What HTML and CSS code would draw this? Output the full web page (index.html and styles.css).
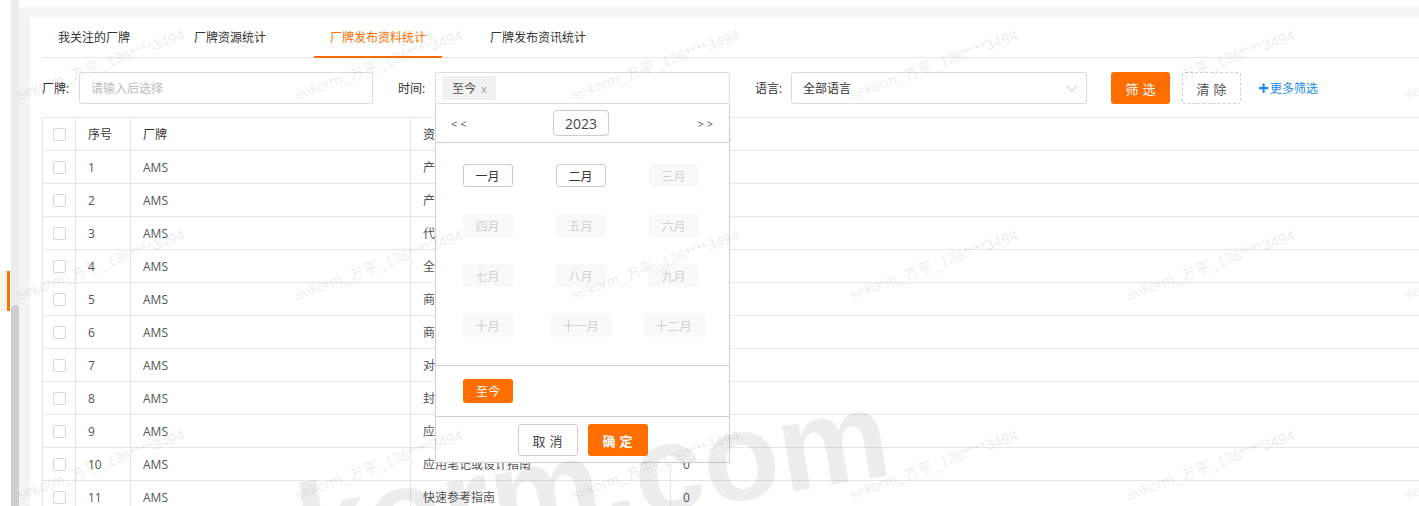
FILE: index.html
```html
<!DOCTYPE html>
<html lang="zh-CN">
<head>
<meta charset="utf-8">
<title>厂牌发布资料统计</title>
<link rel="stylesheet" href="styles.css">
</head>
<body>
<div class="app">
  <aside class="sidebar">
    <div class="side-item active"></div>
  </aside>
  <div class="side-scroll"><div class="thumb"></div></div>
  <main class="main">
    <div class="topband"></div>
    <div class="card">
      <nav class="tabs">
        <div class="tab">我关注的厂牌</div>
        <div class="tab">厂牌资源统计</div>
        <div class="tab active">厂牌发布资料统计</div>
        <div class="tab">厂牌发布资讯统计</div>
      </nav>

      <div class="filters">
        <div class="field">
          <span class="label">厂牌:</span>
          <div class="control brand"><span class="placeholder">请输入后选择</span></div>
        </div>
        <div class="field time-field">
          <span class="label">时间:</span>
          <div class="time-wrap">
            <div class="control time">
              <span class="tag">至今<span class="tag-x">x</span></span>
            </div>
            <div class="picker">
              <div class="year-row">
                <span class="arrow">&lt; &lt;</span>
                <span class="year">2023</span>
                <span class="arrow">&gt; &gt;</span>
              </div>
              <div class="months">
                <span class="month on">一月</span>
                <span class="month on">二月</span>
                <span class="month off">三月</span>
                <span class="month off">四月</span>
                <span class="month off">五月</span>
                <span class="month off">六月</span>
                <span class="month off">七月</span>
                <span class="month off">八月</span>
                <span class="month off">九月</span>
                <span class="month off">十月</span>
                <span class="month off wide">十一月</span>
                <span class="month off wide">十二月</span>
              </div>
              <div class="now-row"><span class="now-btn">至今</span></div>
              <div class="picker-foot">
                <span class="btn ghost">取消</span>
                <span class="btn primary">确定</span>
              </div>
            </div>
          </div>
        </div>
        <div class="field lang-field">
          <span class="label">语言:</span>
          <div class="control lang">
            <span class="value">全部语言</span>
            <svg class="chev" width="11" height="7" viewBox="0 0 11 7"><polyline points="0.5,0.5 5.5,6.5 10.5,0.5" fill="none" stroke="#c4c4c4" stroke-width="1"/></svg>
          </div>
        </div>
        <span class="btn primary filter-btn">筛选</span>
        <span class="btn dashed">清除</span>
        <span class="more"><b>+</b>更多筛选</span>
      </div>

      <table class="grid">
        <colgroup>
          <col class="c-check"><col class="c-no"><col class="c-brand"><col class="c-name"><col>
        </colgroup>
        <thead>
          <tr><th><span class="cb"></span></th><th>序号</th><th>厂牌</th><th>资料类型</th><th>资料数量</th></tr>
        </thead>
        <tbody>
          <tr><td><span class="cb"></span></td><td>1</td><td>AMS</td><td>产品手册</td><td>0</td></tr>
          <tr><td><span class="cb"></span></td><td>2</td><td>AMS</td><td>产品简介</td><td>0</td></tr>
          <tr><td><span class="cb"></span></td><td>3</td><td>AMS</td><td>代理商信息</td><td>0</td></tr>
          <tr><td><span class="cb"></span></td><td>4</td><td>AMS</td><td>全部资料</td><td>0</td></tr>
          <tr><td><span class="cb"></span></td><td>5</td><td>AMS</td><td>商品目录</td><td>0</td></tr>
          <tr><td><span class="cb"></span></td><td>6</td><td>AMS</td><td>商品选型表</td><td>0</td></tr>
          <tr><td><span class="cb"></span></td><td>7</td><td>AMS</td><td>对比表</td><td>0</td></tr>
          <tr><td><span class="cb"></span></td><td>8</td><td>AMS</td><td>封装信息</td><td>0</td></tr>
          <tr><td><span class="cb"></span></td><td>9</td><td>AMS</td><td>应用指南</td><td>0</td></tr>
          <tr><td><span class="cb"></span></td><td>10</td><td>AMS</td><td>应用笔记或设计指南</td><td>0</td></tr>
          <tr><td><span class="cb"></span></td><td>11</td><td>AMS</td><td>快速参考指南</td><td>0</td></tr>
        </tbody>
      </table>
    </div>
  </main>
</div>

<div class="wm-layer">
  <div class="wm-grid">
    <span class="wm">sekorm_方平_136****3494</span><span class="wm">sekorm_方平_136****3494</span><span class="wm">sekorm_方平_136****3494</span><span class="wm">sekorm_方平_136****3494</span><span class="wm">sekorm_方平_136****3494</span><span class="wm">sekorm_方平_136****3494</span>
    <span class="wm">sekorm_方平_136****3494</span><span class="wm">sekorm_方平_136****3494</span><span class="wm">sekorm_方平_136****3494</span><span class="wm">sekorm_方平_136****3494</span><span class="wm">sekorm_方平_136****3494</span><span class="wm">sekorm_方平_136****3494</span>
    <span class="wm">sekorm_方平_136****3494</span><span class="wm">sekorm_方平_136****3494</span><span class="wm">sekorm_方平_136****3494</span><span class="wm">sekorm_方平_136****3494</span><span class="wm">sekorm_方平_136****3494</span><span class="wm">sekorm_方平_136****3494</span>
  </div>
  <div class="wm-big">sekorm.com</div>
</div>
</body>
</html>
```

FILE: styles.css
```css
* { box-sizing: border-box; }

html, body {
  margin: 0;
  padding: 0;
  width: 1419px;
  height: 506px;
  overflow: hidden;
  background: #fff;
  font-family: "Open Sans", "Noto Sans CJK SC", sans-serif;
  font-size: 12px;
  color: #333;
}

.app {
  display: flex;
  height: 506px;
}

/* left sidebar */
.sidebar {
  width: 11px;
  flex: none;
  background: #fff;
  padding-top: 271px;
}
.side-item {
  height: 40px;
  width: 10px;
}
.side-item.active {
  background: #fff5e8;
  border-right: 3px solid #ff6e00;
}

.side-scroll {
  width: 8px;
  flex: none;
  background: #ececec;
  display: flex;
  flex-direction: column;
  padding-top: 305px;
}
.thumb {
  flex: 1;
  background: #cfcfd1;
  border-radius: 4px 4px 0 0;
}

/* main */
.main {
  flex: 1;
  min-width: 0;
  background: #f4f4f4;
  display: flex;
  flex-direction: column;
}
.topband {
  height: 7px;
  background: #fff;
  flex: none;
}
.card {
  flex: 1;
  margin: 10px 0 0 11px;
  background: #fff;
  padding-left: 12px;
}

/* tabs */
.tabs {
  display: flex;
  align-items: flex-start;
  gap: 32px;
  height: 41px;
  border-bottom: 1px solid #e6e6e6;
}
.tab {
  padding: 0 16px;
  height: 40px;
  line-height: 41px;
  color: #333;
}
.tab.active {
  color: #ff6e00;
  height: 41px;
  border-bottom: 2px solid #ff6e00;
}

/* filters */
.filters {
  display: flex;
  align-items: center;
  height: 32px;
  margin-top: 14px;
}
.field {
  display: flex;
  align-items: center;
  margin-right: 25px;
}
.lang-field { margin-right: 24px; }
.label {
  width: 37px;
  flex: none;
  color: #333;
}
.lang-field .label { width: 36px; }
.control {
  height: 32px;
  border: 1px solid #dcdcdc;
  border-radius: 3px;
  display: flex;
  align-items: center;
  background: #fff;
}
.brand { width: 294px; padding-left: 11px; }
.placeholder { color: #bcbcbc; }
.time-wrap { position: relative; }
.time { width: 295px; padding-left: 6px; }
.tag {
  display: inline-flex;
  align-items: center;
  height: 24px;
  padding: 0 9px 0 10px;
  background: #f1f1f1;
  border-radius: 3px;
  color: #555;
}
.tag-x {
  margin-left: 5px;
  color: #999;
  font-size: 11px;
}
.lang {
  width: 296px;
  padding: 0 9px 0 11px;
  justify-content: space-between;
}
.lang .value { color: #333; }

/* buttons */
.btn {
  display: inline-flex;
  align-items: center;
  justify-content: center;
  height: 32px;
  border-radius: 3px;
  font-size: 13px;
  letter-spacing: 4px;
  text-indent: 4px;
}
.btn.primary {
  background: #ff6e00;
  color: #fff;
}
.filter-btn { width: 59px; }
.btn.dashed {
  width: 59px;
  margin-left: 12px;
  border: 1px dashed #cfcfcf;
  color: #555;
}
.more {
  margin-left: 17px;
  color: #1b8cf0;
  display: inline-flex;
  align-items: center;
}
.more b {
  font-size: 19px;
  font-weight: 700;
  line-height: 1;
  margin-right: 1px;
}

/* date picker */
.picker {
  position: absolute;
  left: 0;
  top: 32px;
  width: 295px;
  background: #fff;
  border: 1px solid #d2d2d2;
  border-top: none;
  z-index: 5;
}
.year-row {
  height: 39px;
  border-bottom: 1px solid #d2d2d2;
  display: flex;
  align-items: center;
  justify-content: space-between;
  padding: 0 16px 0 15px;
}
.arrow {
  color: #555;
  font-size: 11px;
}
.year {
  width: 56px;
  height: 26px;
  border: 1px solid #cccccc;
  border-radius: 4px;
  display: flex;
  align-items: center;
  justify-content: center;
  font-size: 14px;
  color: #444;
  margin-right: 2px;
}
.months {
  display: grid;
  grid-template-columns: repeat(3, 93px);
  justify-items: center;
  row-gap: 27px;
  padding: 21px 0 28px 5px;
  border-bottom: 1px solid #d2d2d2;
}
.month {
  width: 50px;
  height: 23px;
  border-radius: 3px;
  display: flex;
  align-items: center;
  justify-content: center;
  font-size: 12px;
}
.month.wide { width: 62px; }
.month.on {
  border: 1px solid #cbcbcb;
  color: #333;
}
.month.off {
  background: #f9f9f9;
  color: #d0d0d0;
}
.now-row {
  padding: 13px 0 13px 27px;
  border-bottom: 1px solid #d2d2d2;
  display: flex;
}
.now-btn {
  width: 50px;
  height: 24px;
  border-radius: 3px;
  background: #ff6e00;
  color: #fff;
  display: flex;
  align-items: center;
  justify-content: center;
}
.picker-foot {
  display: flex;
  justify-content: center;
  gap: 10px;
  padding: 7px 0 6px;
}
.picker-foot .btn { width: 60px; }
.btn.ghost {
  border: 1px solid #cfcfcf;
  color: #444;
}
.picker-foot .btn.primary { font-weight: 600; }

/* table */
.grid {
  margin-top: 13px;
  width: 100%;
  border-collapse: collapse;
  table-layout: fixed;
}
.c-check { width: 33px; }
.c-no { width: 55px; }
.c-brand { width: 280px; }
.c-name { width: 260px; }
.grid th, .grid td {
  height: 33px;
  padding: 0 0 0 12px;
  border: 1px solid #e6e6e6;
  text-align: left;
  font-weight: 400;
  white-space: nowrap;
  overflow: hidden;
}
.grid th { color: #333; }
.grid td { color: #555; }
.grid th:first-child, .grid td:first-child { padding-left: 10px; }
.grid th:last-child, .grid td:last-child { border-right: none; }
.cb {
  display: block;
  width: 13px;
  height: 13px;
  border: 1px solid #d6d6d6;
  border-radius: 2px;
  background: #fff;
}

/* watermarks (overlay) */
.wm-layer {
  position: absolute;
  left: 0;
  top: 0;
  width: 1419px;
  height: 506px;
  overflow: hidden;
  pointer-events: none;
  z-index: 20;
}
.wm-grid {
  position: absolute;
  left: 20px;
  top: 87px;
  display: grid;
  grid-template-columns: repeat(6, 277.5px);
  grid-auto-rows: 200px;
}
.wm {
  display: block;
  height: 16px;
  line-height: 16px;
  font-family: "Liberation Sans", "Noto Sans CJK SC", sans-serif;
  font-size: 15px;
  color: rgba(0, 0, 0, 0.09);
  white-space: nowrap;
  transform-origin: 0 100%;
  transform: rotate(-20deg);
}
.wm-big {
  position: absolute;
  left: 168px;
  top: 490px;
  line-height: 125px;
  height: 125px;
  font-family: "Liberation Sans", sans-serif;
  font-weight: 700;
  font-size: 125px;
  color: rgba(0, 0, 0, 0.07);
  white-space: nowrap;
  transform-origin: 0 106px;
  transform: rotate(-9.5deg);
}
```
